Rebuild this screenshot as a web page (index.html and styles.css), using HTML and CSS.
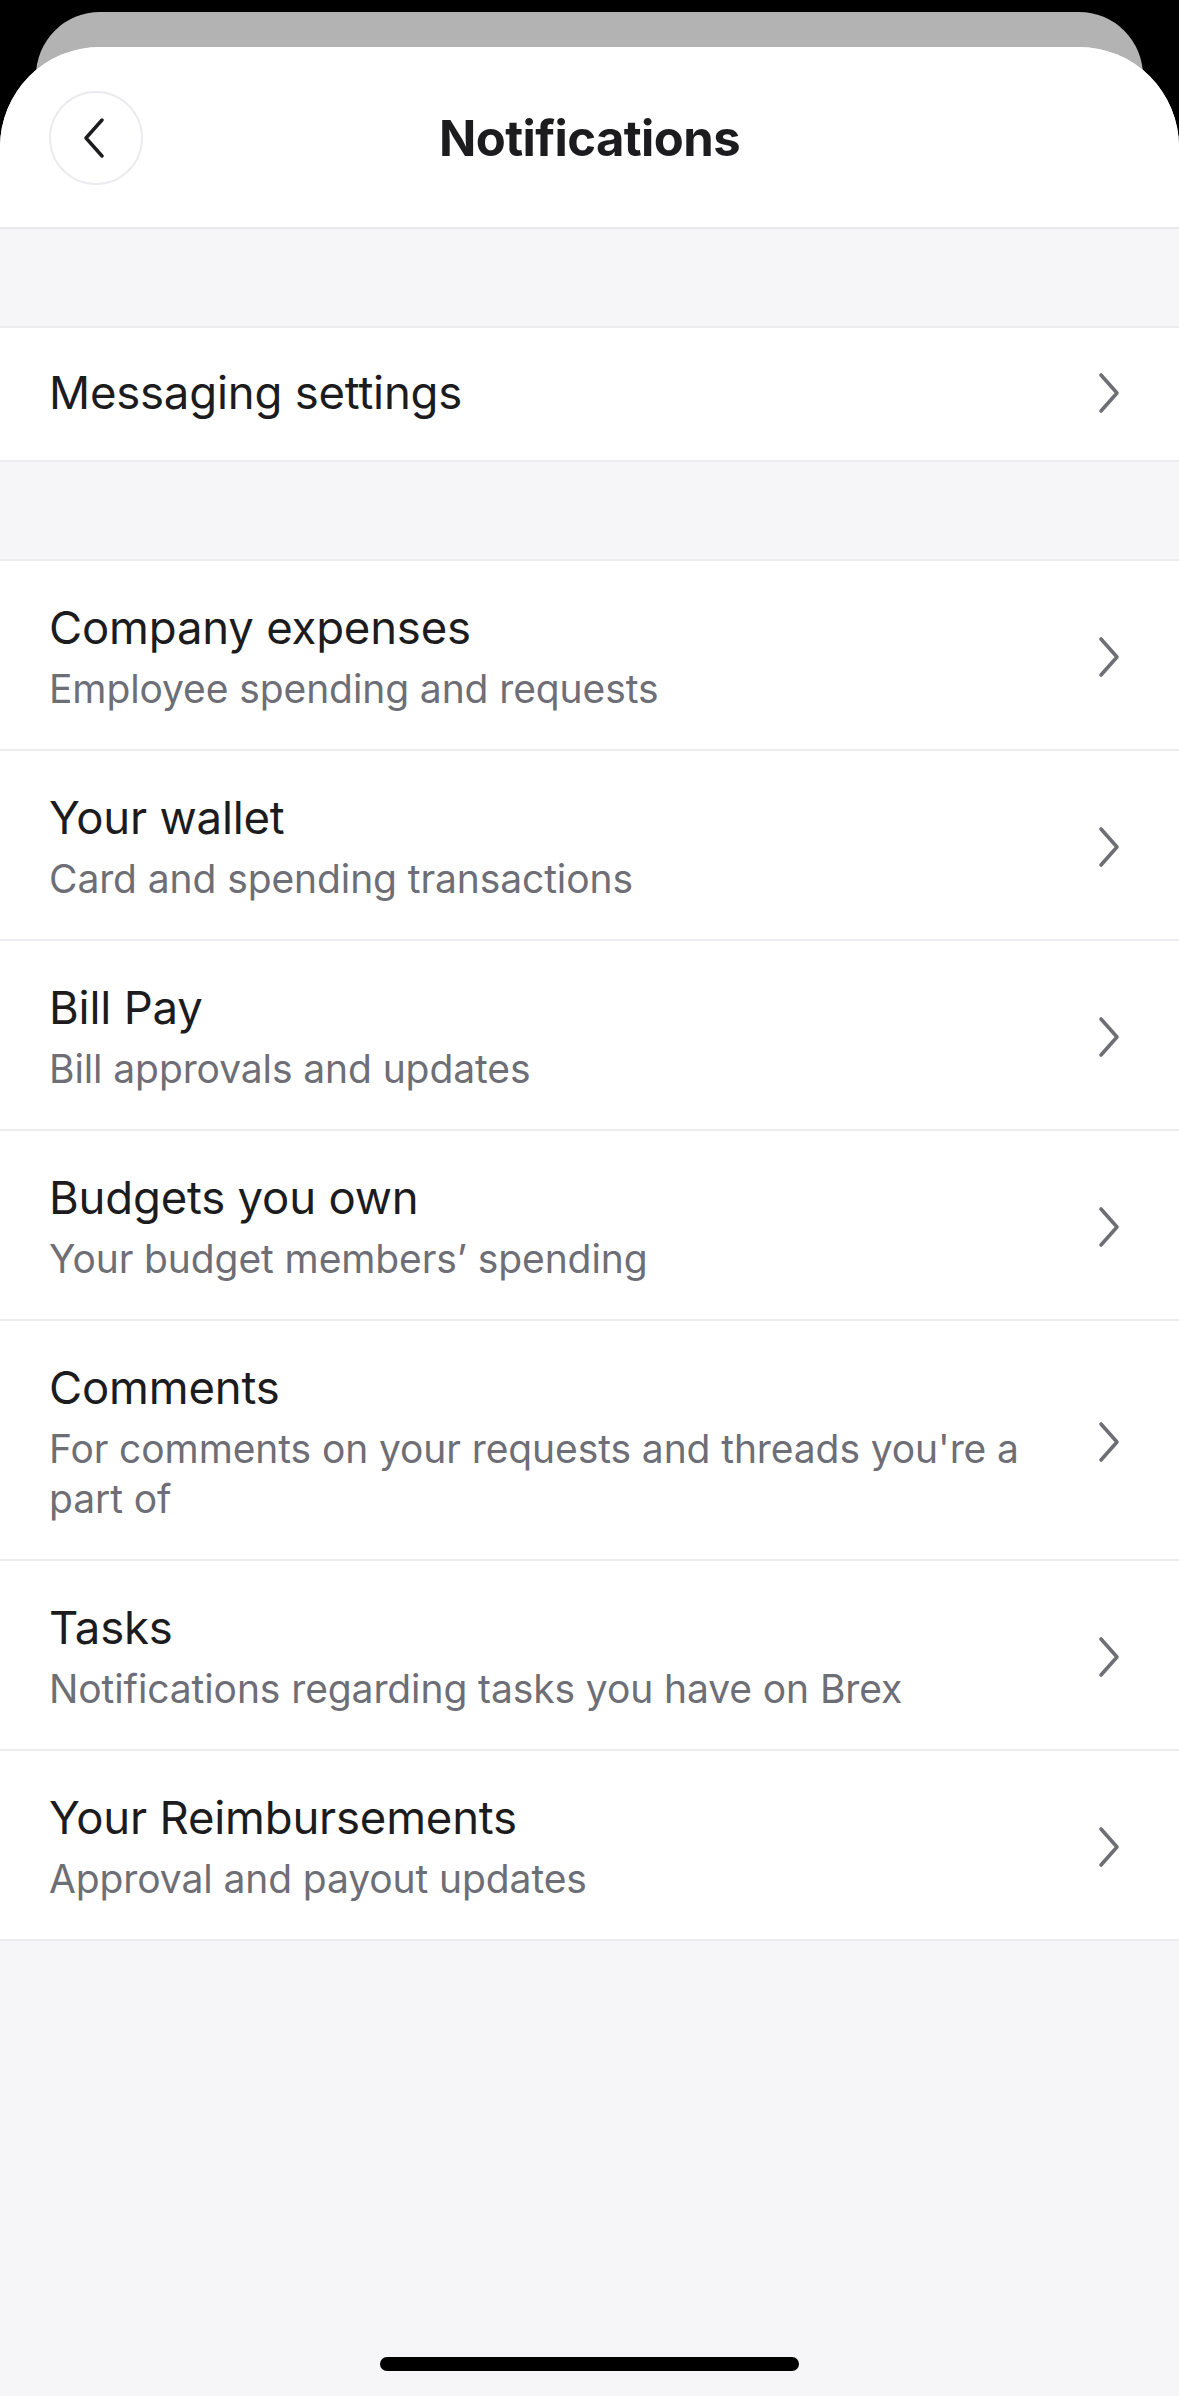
FILE: index.html
```html
<!DOCTYPE html>
<html lang="en">
<head>
<meta charset="utf-8">
<title>Notifications</title>
<link rel="stylesheet" href="styles.css">
</head>
<body>
<div class="screen">
  <div class="backcard"></div>
  <div class="sheet">
    <header class="header">
      <button class="back" aria-label="Back">
        <svg width="24" height="40" viewBox="0 0 24 40"><polyline points="20,2 4,20 20,38" fill="none" stroke="#1c1c1e" stroke-width="3.4" stroke-linecap="round" stroke-linejoin="round"/></svg>
      </button>
      <h1 class="title">Notifications</h1>
      <div class="spacer-col"></div>
    </header>

    <div class="gap"></div>

    <section class="group">
      <div class="row row-single">
        <div class="texts"><div class="row-title">Messaging settings</div></div>
        <svg class="chev" width="24" height="42" viewBox="0 0 24 42"><polyline points="4,3 20,21 4,39" fill="none" stroke="#6e6e75" stroke-width="3.6" stroke-linecap="round" stroke-linejoin="round"/></svg>
      </div>
    </section>

    <div class="gap"></div>

    <section class="group">
      <div class="row">
        <div class="texts"><div class="row-title">Company expenses</div><div class="row-sub">Employee spending and requests</div></div>
        <svg class="chev" width="24" height="42" viewBox="0 0 24 42"><polyline points="4,3 20,21 4,39" fill="none" stroke="#6e6e75" stroke-width="3.6" stroke-linecap="round" stroke-linejoin="round"/></svg>
      </div>
      <div class="row">
        <div class="texts"><div class="row-title">Your wallet</div><div class="row-sub">Card and spending transactions</div></div>
        <svg class="chev" width="24" height="42" viewBox="0 0 24 42"><polyline points="4,3 20,21 4,39" fill="none" stroke="#6e6e75" stroke-width="3.6" stroke-linecap="round" stroke-linejoin="round"/></svg>
      </div>
      <div class="row">
        <div class="texts"><div class="row-title">Bill Pay</div><div class="row-sub">Bill approvals and updates</div></div>
        <svg class="chev" width="24" height="42" viewBox="0 0 24 42"><polyline points="4,3 20,21 4,39" fill="none" stroke="#6e6e75" stroke-width="3.6" stroke-linecap="round" stroke-linejoin="round"/></svg>
      </div>
      <div class="row">
        <div class="texts"><div class="row-title">Budgets you own</div><div class="row-sub">Your budget members’ spending</div></div>
        <svg class="chev" width="24" height="42" viewBox="0 0 24 42"><polyline points="4,3 20,21 4,39" fill="none" stroke="#6e6e75" stroke-width="3.6" stroke-linecap="round" stroke-linejoin="round"/></svg>
      </div>
      <div class="row">
        <div class="texts"><div class="row-title">Comments</div><div class="row-sub">For comments on your requests and threads you're a part of</div></div>
        <svg class="chev" width="24" height="42" viewBox="0 0 24 42"><polyline points="4,3 20,21 4,39" fill="none" stroke="#6e6e75" stroke-width="3.6" stroke-linecap="round" stroke-linejoin="round"/></svg>
      </div>
      <div class="row">
        <div class="texts"><div class="row-title">Tasks</div><div class="row-sub">Notifications regarding tasks you have on Brex</div></div>
        <svg class="chev" width="24" height="42" viewBox="0 0 24 42"><polyline points="4,3 20,21 4,39" fill="none" stroke="#6e6e75" stroke-width="3.6" stroke-linecap="round" stroke-linejoin="round"/></svg>
      </div>
      <div class="row row-last">
        <div class="texts"><div class="row-title">Your Reimbursements</div><div class="row-sub">Approval and payout updates</div></div>
        <svg class="chev" width="24" height="42" viewBox="0 0 24 42"><polyline points="4,3 20,21 4,39" fill="none" stroke="#6e6e75" stroke-width="3.6" stroke-linecap="round" stroke-linejoin="round"/></svg>
      </div>
    </section>

    <div class="fill"></div>
    <div class="home-bar"></div>
  </div>
</div>
</body>
</html>
```

FILE: styles.css
```css
html, body {
  margin: 0;
  padding: 0;
  background: #000;
}

.screen {
  width: 1179px;
  height: 2396px;
  display: flex;
  flex-direction: column;
  overflow: hidden;
  font-family: Inter, "Noto Sans", "Liberation Sans", sans-serif;
  color: #1c1c1e;
}

.backcard {
  flex: 0 0 auto;
  height: 70px;
  margin: 12px 36px 0;
  background: #b3b3b3;
  border-radius: 64px 64px 0 0;
}

.sheet {
  flex: 1 1 auto;
  margin-top: -35px;
  background: #f6f6f8;
  border-radius: 100px 100px 0 0;
  overflow: hidden;
  display: flex;
  flex-direction: column;
}

.header {
  flex: 0 0 auto;
  background: #fff;
  height: 182px;
  box-sizing: border-box;
  padding: 44px 49px 0;
  border-bottom: 2px solid #e7e7ec;
  display: grid;
  grid-template-columns: 94px 1fr 94px;
  align-items: start;
}

.back {
  width: 94px;
  height: 94px;
  box-sizing: border-box;
  border: 2px solid #ebebef;
  border-radius: 50%;
  background: #fff;
  padding: 0 4px 0 0;
  margin: 0;
  display: flex;
  align-items: center;
  justify-content: center;
}

.title {
  margin: 0;
  text-align: center;
  font-size: 49px;
  font-weight: 700;
  letter-spacing: -0.6px;
  line-height: 96px;
  color: #1c1c1e;
}

.gap {
  flex: 0 0 auto;
  height: 97px;
}

.group {
  flex: 0 0 auto;
  background: #fff;
  border-top: 2px solid #ececf0;
  border-bottom: 2px solid #ececf0;
}

.row {
  display: flex;
  align-items: center;
  padding: 39px 49px 35px 49px;
  border-bottom: 2px solid #ececf0;
  gap: 30px;
}

.row-last {
  border-bottom: none;
}

.row-single {
  padding: 37px 49px 39px 49px;
  border-bottom: none;
}

.texts {
  flex: 1 1 auto;
  min-width: 0;
}

.row-title {
  font-size: 45.5px;
  line-height: 56px;
  font-weight: 400;
  color: #1c1c1e;
  letter-spacing: -0.2px;
}

.row-sub {
  margin-top: 8px;
  font-size: 39px;
  line-height: 50px;
  color: #6e6e76;
  letter-spacing: -0.1px;
}

.chev {
  flex: 0 0 auto;
  margin-right: 9px;
}

.fill {
  flex: 1 1 auto;
}

.home-bar {
  flex: 0 0 auto;
  width: 419px;
  height: 14px;
  border-radius: 7px;
  background: #000;
  margin: 0 auto 25px;
}
```
